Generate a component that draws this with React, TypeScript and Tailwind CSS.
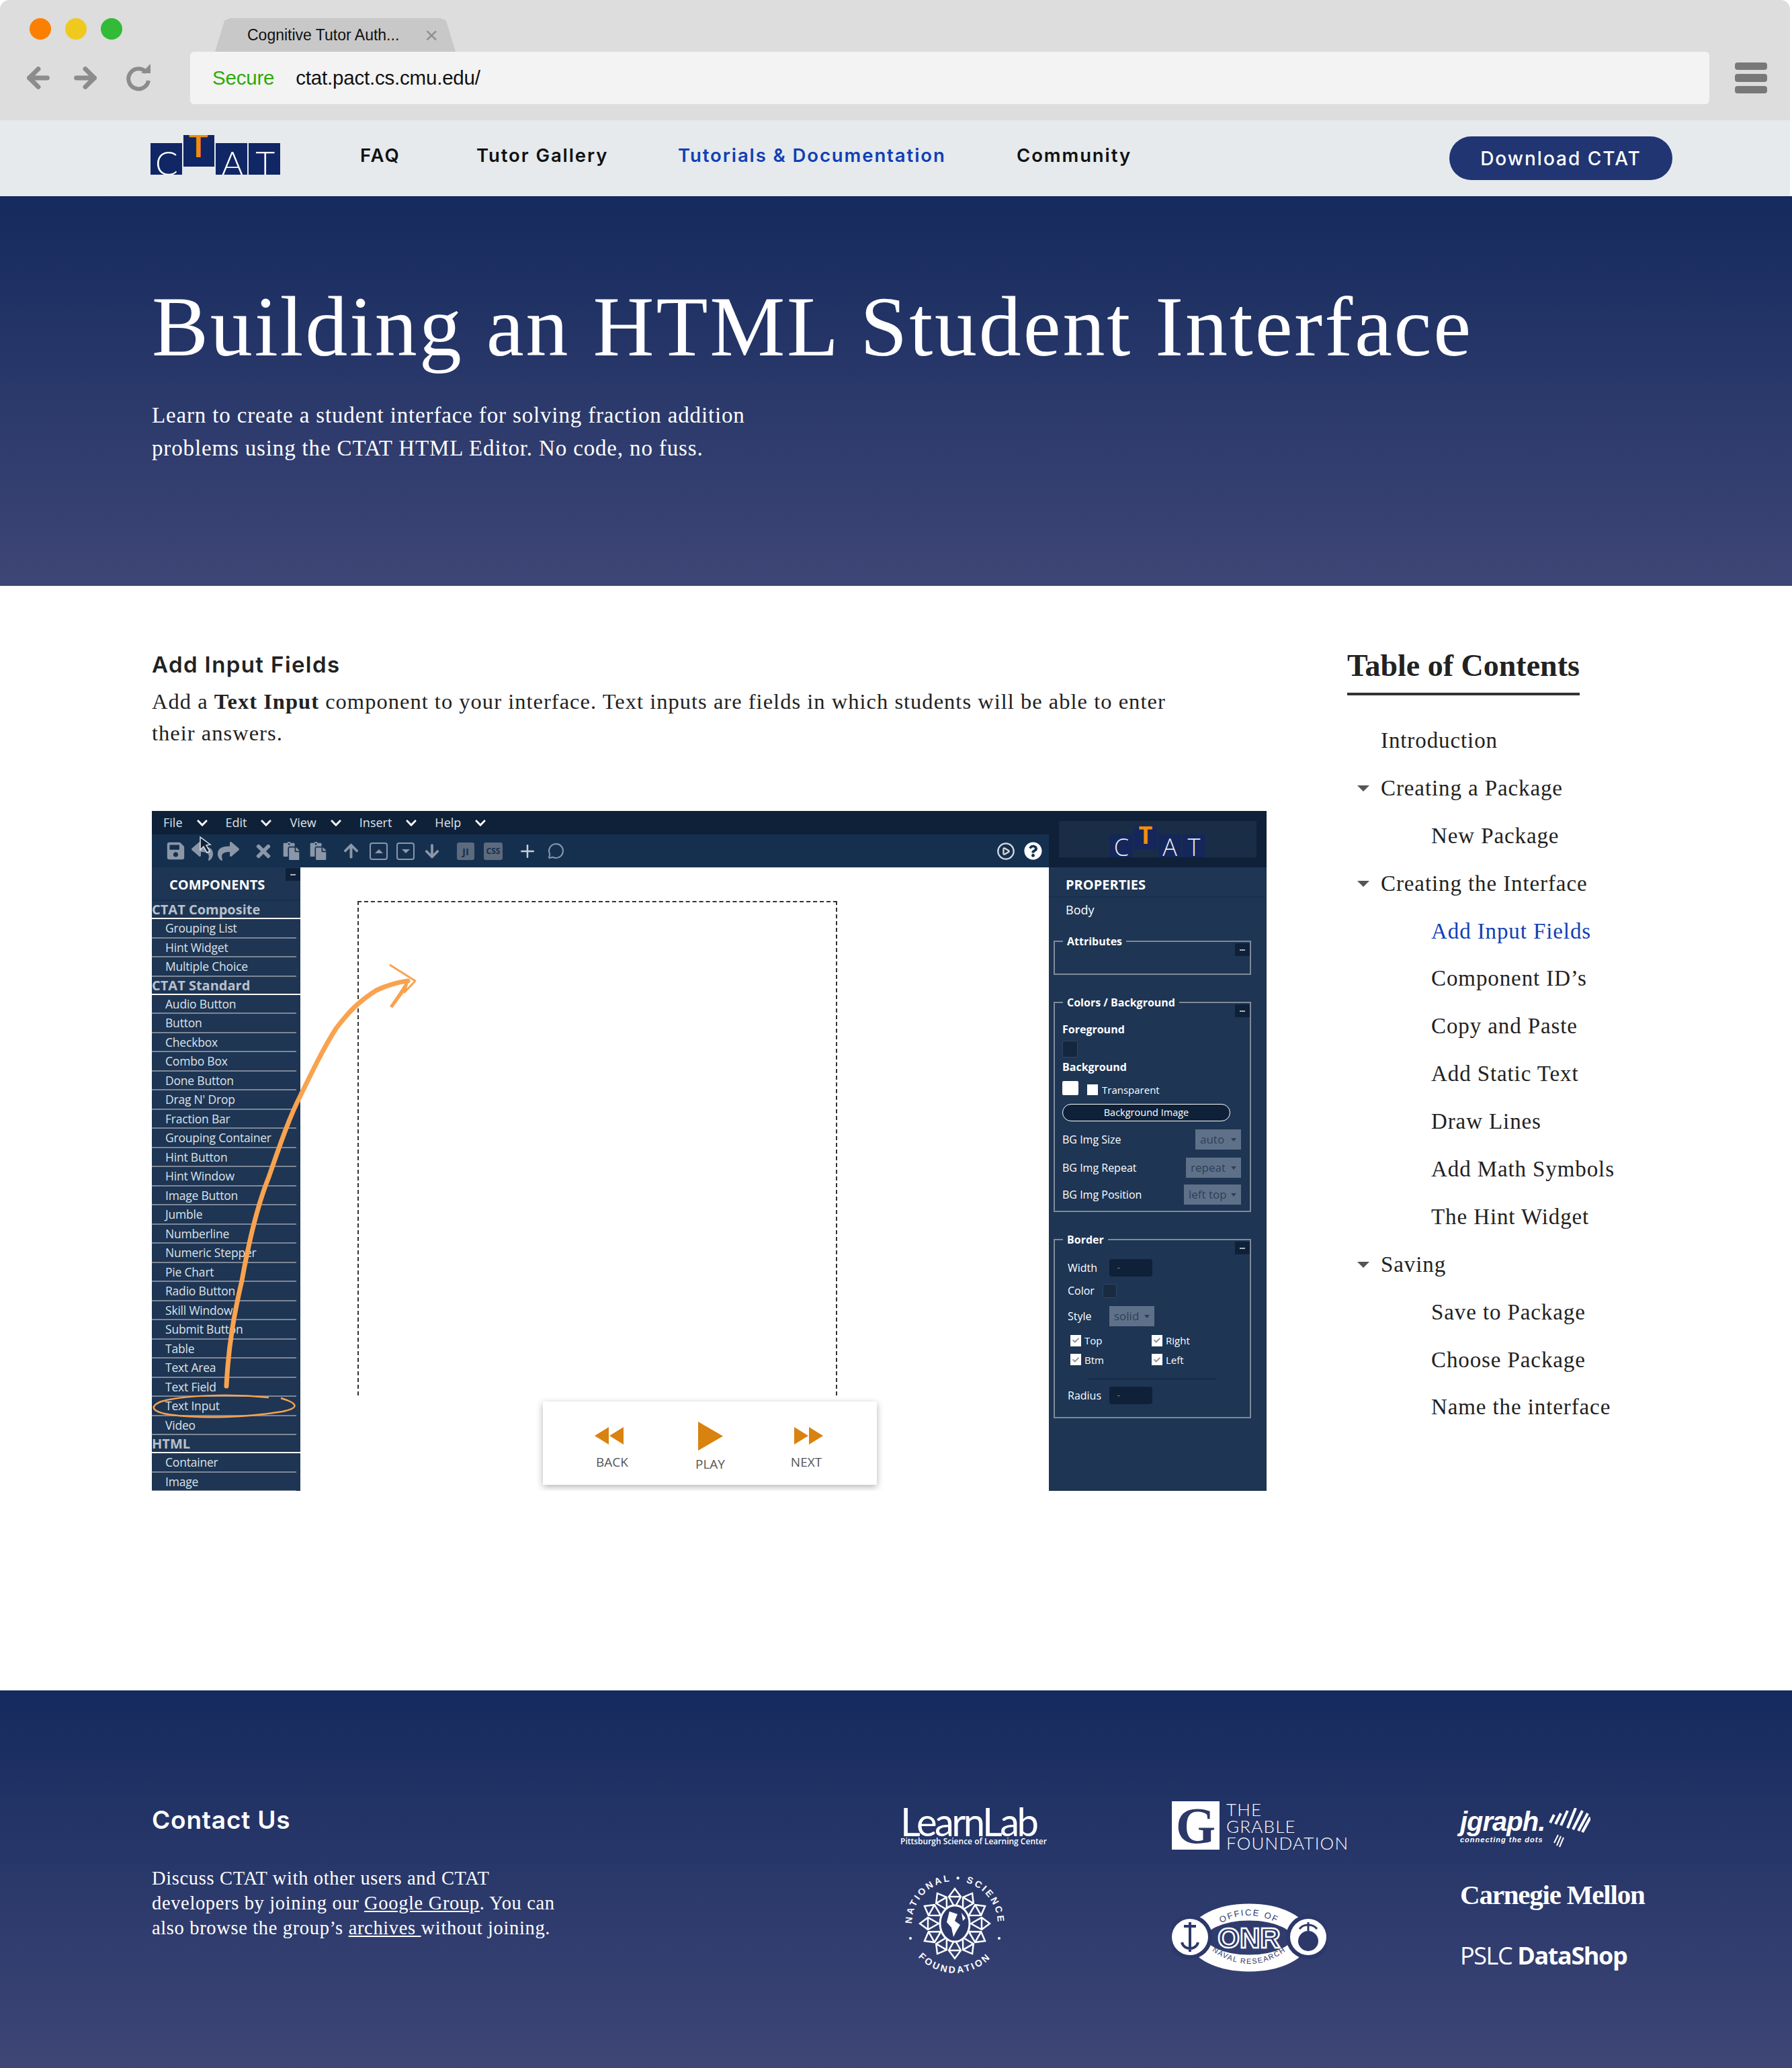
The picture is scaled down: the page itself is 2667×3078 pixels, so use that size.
import React from 'react';
import { FaSave, FaReply, FaShare, FaTimes, FaPaste, FaArrowUp, FaArrowDown, FaQuestionCircle, FaChevronDown, FaCheck } from 'react-icons/fa';
import { ArrowLeft, ArrowRight, Plus, MessageCircle, CirclePlay } from 'lucide-react';

const composite = ['Grouping List', 'Hint Widget', 'Multiple Choice'];
const standard = ['Audio Button', 'Button', 'Checkbox', 'Combo Box', 'Done Button', "Drag N' Drop", 'Fraction Bar', 'Grouping Container', 'Hint Button', 'Hint Window', 'Image Button', 'Jumble', 'Numberline', 'Numeric Stepper', 'Pie Chart', 'Radio Button', 'Skill Window', 'Submit Button', 'Table', 'Text Area', 'Text Field', 'Text Input', 'Video'];
const html = ['Container', 'Image'];

const toc: { label: string; level: number; caret?: boolean; active?: boolean }[] = [
  { label: 'Introduction', level: 0 },
  { label: 'Creating a Package', level: 0, caret: true },
  { label: 'New Package', level: 1 },
  { label: 'Creating the Interface', level: 0, caret: true },
  { label: 'Add Input Fields', level: 1, active: true },
  { label: 'Component ID’s', level: 1 },
  { label: 'Copy and Paste', level: 1 },
  { label: 'Add Static Text', level: 1 },
  { label: 'Draw Lines', level: 1 },
  { label: 'Add Math Symbols', level: 1 },
  { label: 'The Hint Widget', level: 1 },
  { label: 'Saving', level: 0, caret: true },
  { label: 'Save to Package', level: 1 },
  { label: 'Choose Package', level: 1 },
  { label: 'Name the interface', level: 1 },
];

const Row = ({ label }: { label: string }) => (
  <div className="h-[28.5px] w-[215px] border-b-2 border-[#7d8797] pl-[20px] text-[17.5px] leading-[26px] tracking-[-0.2px] text-[#dde2e8]">{label}</div>
);

const Group = ({ label }: { label: string }) => (
  <div className="h-[27px] w-full border-b-2 border-white text-[20px] leading-[25px] font-bold text-[#b9c0cb]">{label}</div>
);

const Minus = ({ top = 'top-[1px]' }: { top?: string }) => (
  <div className={`absolute right-0 flex h-[19px] w-[22px] items-center justify-center bg-[#0f2138] ${top}`}>
    <div className="h-[2px] w-[8px] bg-[#aab2bd]"></div>
  </div>
);

const Select = ({ value, w }: { value: string; w: string }) => (
  <div className={`flex h-[30px] items-center justify-between bg-[#5f7189] pr-[7px] pl-[7px] text-[17px] text-[#2c3f58] ${w}`}>
    {value}
    <span className="h-0 w-0 border-x-[4px] border-t-[5px] border-x-transparent border-t-[#2c3f58]"></span>
  </div>
);

const Check = ({ label }: { label: string }) => (
  <div className="flex items-center gap-[5px] text-[15px] text-white">
    <span className="flex h-[17px] w-[16px] items-center justify-center bg-white text-[#8d949c]">
      <FaCheck size={10} />
    </span>
    {label}
  </div>
);

const CtatLogo = () => (
  <div className="mt-[-10px] flex h-[59px] w-[193px] gap-[2px] font-['Lato',sans-serif]">
    <div className="mt-[12px] h-[47px] w-[47px] overflow-hidden bg-[#112664] pl-[7px] text-[50px] leading-[58px] font-light text-white">C</div>
    <div className="flex h-[47px] w-[47px] justify-center overflow-hidden bg-[#112664] text-[48px] leading-[30px] font-bold text-[#f28c0f]">T</div>
    <div className="mt-[12px] h-[47px] w-[47px] overflow-hidden bg-[#112664] pl-[8px] text-[50px] leading-[58px] font-light text-white">A</div>
    <div className="mt-[12px] h-[47px] w-[47px] overflow-hidden bg-[#112664] pl-[10px] text-[50px] leading-[58px] font-light text-white">T</div>
  </div>
);

const NavBar = () => (
  <div className="flex h-[113px] items-center bg-[#e6eaed] pr-[175px] pl-[224px] font-['Inter',sans-serif] text-[27.5px] font-semibold tracking-[1.9px] text-[#111]">
    <CtatLogo />
    <a className="mt-[-8px] ml-[119px] w-[173px]">FAQ</a>
    <a className="mt-[-8px] w-[300px]">Tutor Gallery</a>
    <a className="mt-[-8px] w-[504px] text-[#1140b5]">Tutorials &amp; Documentation</a>
    <a className="mt-[-8px]">Community</a>
    <button className="ml-auto h-[65px] w-[332px] rounded-full bg-[#203572] text-[28px] font-medium tracking-[2px] text-white">Download CTAT</button>
  </div>
);

const BrowserChrome = () => (
  <div className="h-[179px] overflow-hidden rounded-t-[14px] bg-[#dddddd] font-['Liberation_Sans',sans-serif]">
    <div className="flex h-[77px] pt-[27px] pl-[44px]">
      <div className="flex gap-[21px]">
        <span className="h-[32px] w-[32px] rounded-full bg-[#fb7f00]"></span>
        <span className="h-[32px] w-[32px] rounded-full bg-[#f0c91f]"></span>
        <span className="h-[32px] w-[32px] rounded-full bg-[#31bb36]"></span>
      </div>
      <div className="ml-[138px] flex h-[50px] w-[358px] items-center justify-between bg-[#c8c8c8] pr-[26px] pl-[48px] text-[23px] text-[#111] [clip-path:polygon(0_100%,14px_8%,22px_0,calc(100%-22px)_0,calc(100%-14px)_8%,100%_100%)]">
        <span>Cognitive Tutor Auth...</span>
        <span className="text-[34px] leading-[34px] text-[#8f8f8f]">×</span>
      </div>
    </div>
    <div className="flex h-[78px] items-center pr-[34px] pl-[34px]">
      <ArrowLeft size={46} strokeWidth={3.6} className="text-[#8c8c8c]" />
      <ArrowRight size={46} strokeWidth={3.6} className="ml-[24px] text-[#8c8c8c]" />
      <svg viewBox="0 0 40 44" className="ml-[36px] h-[44px] w-[40px] text-[#8c8c8c]">
        <path d="M32 14a15 15 0 1 0 3 12" fill="none" stroke="currentColor" strokeWidth="6" />
        <path d="M24 15h14V1z" fill="currentColor" />
      </svg>
      <div className="ml-[57px] flex h-full w-[2262px] items-center rounded-[6px] bg-[#f3f3f3] pl-[33px] text-[29.5px] tracking-[-0.2px] text-[#111]">
        <span className="text-[#2eaa05]">Secure</span>
        <span className="ml-[32px]">ctat.pact.cs.cmu.edu/</span>
      </div>
      <div className="ml-[38px] flex w-[48px] flex-col gap-[6px]">
        <span className="h-[11px] rounded-[4px] bg-[#787878]"></span>
        <span className="h-[12px] rounded-[4px] bg-[#787878]"></span>
        <span className="h-[11px] rounded-[4px] bg-[#787878]"></span>
      </div>
    </div>
  </div>
);

const Toolbar = () => (
  <div className="flex h-[49px] items-center bg-[#15304f] pl-[21px] text-[#8b97a8]">
    <FaSave size={29} />
    <FaReply size={32} className="ml-[9px]" />
    <FaShare size={32} className="ml-[7px]" />
    <FaTimes size={30} className="ml-[21px]" />
    <FaPaste size={27} className="ml-[13px]" />
    <FaPaste size={27} className="ml-[13px]" />
    <FaArrowUp size={25} className="ml-[23px]" />
    <span className="ml-[15px] flex h-[26px] w-[27px] items-center justify-center rounded-[4px] border-2 border-[#8b97a8]">
      <span className="h-0 w-0 border-x-[6px] border-b-[6px] border-x-transparent border-b-[#8b97a8]"></span>
    </span>
    <span className="ml-[13px] flex h-[26px] w-[27px] items-center justify-center rounded-[4px] border-2 border-[#8b97a8]">
      <span className="h-0 w-0 border-x-[6px] border-t-[6px] border-x-transparent border-t-[#8b97a8]"></span>
    </span>
    <FaArrowDown size={24} className="ml-[14px]" />
    <span className="ml-[25px] h-[26px] w-[26px] rounded-[3px] bg-[#5d6a7c] text-center text-[15px] leading-[26px] font-bold text-[#15304f]">JI</span>
    <span className="ml-[14px] h-[26px] w-[28px] rounded-[3px] bg-[#5d6a7c] text-center text-[12px] leading-[26px] font-bold text-[#15304f]">CSS</span>
    <Plus size={30} strokeWidth={2} className="ml-[22px] text-[#c8ced6]" />
    <MessageCircle size={25} strokeWidth={2} className="ml-[15px]" />
    <div className="ml-auto flex items-center gap-[13px] pr-[10px] text-white">
      <CirclePlay size={28} strokeWidth={2} className="text-[#d5d9de]" />
      <FaQuestionCircle size={27} />
    </div>
  </div>
);

const EditorCapture = () => (
  <div className="relative h-[1012px] w-[1659px] overflow-hidden bg-white font-['Open_Sans',sans-serif]">
    <div className="flex h-[84px]">
      <div className="w-[1335px] bg-[#0f2138]">
        <div className="flex h-[35px] items-center text-[18px] text-[#dfe3e8]">
          {['File', 'Edit', 'View', 'Insert', 'Help'].map((name, i) => (
            <React.Fragment key={name}>
              <span className={i === 0 ? 'ml-[17px]' : 'ml-[26px]'}>{name}</span>
              <FaChevronDown size={18} className="ml-[20px] text-white" />
            </React.Fragment>
          ))}
        </div>
        <Toolbar />
      </div>
      <div className="flex w-[324px] justify-center bg-[#0f2138] pt-[15px]">
        <div className="flex h-[54px] w-[294px] items-end justify-center gap-[2px] bg-[#1a2d47] text-[44px] leading-[44px] font-light text-[#e8ebef]">
          <span className="h-[34px] w-[34px] overflow-hidden bg-[#14265a] text-center text-[36px] leading-[38px]">C</span>
          <span className="mb-[12px] h-[34px] w-[34px] overflow-hidden bg-[#14265a] text-center text-[36px] leading-[26px] font-bold text-[#f28c0f]">T</span>
          <span className="h-[34px] w-[34px] overflow-hidden bg-[#14265a] text-center text-[36px] leading-[38px]">A</span>
          <span className="h-[34px] w-[34px] overflow-hidden bg-[#14265a] text-center text-[36px] leading-[38px]">T</span>
        </div>
      </div>
    </div>

    <div className="flex h-[928px]">
      <div className="relative w-[221px] bg-[#1e3553]">
        <Minus />
        <div className="h-[50px] border-b-2 border-[#15304f] pl-[26px] text-[20px] leading-[52px] font-bold text-white">COMPONENTS</div>
        <Group label="CTAT Composite" />
        {composite.map((c) => <Row key={c} label={c} />)}
        <Group label="CTAT Standard" />
        {standard.map((c) => <Row key={c} label={c} />)}
        <Group label="HTML" />
        {html.map((c) => <Row key={c} label={c} />)}
      </div>

      <div className="flex-1 bg-white pt-[50px] pl-[85px]">
        <div className="h-[736px] w-[714px] border-x-2 border-t-2 border-dashed border-[#333]"></div>
      </div>

      <div className="w-[324px] bg-[#1e3553] pr-[23px] pl-[7px] text-white">
        <div className="mr-[-21px] ml-[-7px] h-[45px] border-b-2 border-[#15304f] pl-[25px] text-[20px] leading-[52px] font-bold">PROPERTIES</div>
        <div className="pt-[5px] pl-[18px] text-[18px] leading-[26px]">Body</div>
        <fieldset className="relative mt-[24px] h-[60px] border-2 border-[#7f8a99]">
          <legend className="ml-[12px] px-[6px] text-[16px] leading-[20px] font-bold">Attributes</legend>
          <Minus top="top-[-7px]" />
        </fieldset>
        <fieldset className="relative mt-[31px] h-[322px] border-2 border-[#7f8a99] px-[11px]">
          <legend className="ml-[1px] px-[6px] text-[16px] leading-[20px] font-bold">Colors / Background</legend>
          <Minus top="top-[-7px]" />
          <div className="pt-[20px] text-[16px] leading-[20px] font-bold">Foreground</div>
          <div className="mt-[7px] h-[25px] w-[23px] rounded-[2px] border border-[#2e4565] bg-[#15263f]"></div>
          <div className="mt-[4px] text-[16px] leading-[20px] font-bold">Background</div>
          <div className="mt-[11px] flex items-end">
            <span className="h-[21px] w-[24px] rounded-[2px] bg-white"></span>
            <span className="ml-[13px] h-[16px] w-[16px] bg-white"></span>
            <span className="ml-[6px] text-[15px] leading-[16px]">Transparent</span>
          </div>
          <div className="mt-[13px] flex h-[26px] w-[250px] items-center justify-center rounded-full border border-white bg-[#0f2138] text-[14.5px]">Background Image</div>
          <div className="mt-[12px] flex h-[30px] items-center justify-between pr-[2px] text-[16px]">BG Img Size<Select value="auto" w="w-[68px]" /></div>
          <div className="mt-[12px] flex h-[30px] items-center justify-between pr-[2px] text-[16px]">BG Img Repeat<Select value="repeat" w="w-[82px]" /></div>
          <div className="mt-[10px] flex h-[30px] items-center justify-between pr-[2px] text-[16px]">BG Img Position<Select value="left top" w="w-[85px]" /></div>
        </fieldset>
        <fieldset className="relative mt-[31px] h-[276px] border-2 border-[#7f8a99] pl-[19px]">
          <legend className="ml-[-7px] px-[6px] text-[16px] leading-[20px] font-bold">Border</legend>
          <Minus top="top-[-7px]" />
          <div className="mt-[19px] flex h-[26px] items-center text-[16px]">
            <span className="w-[62px]">Width</span>
            <span className="h-[26px] w-[64px] rounded-[4px] bg-[#0f2138] pl-[12px] text-[12px] leading-[26px] text-[#8b97a8]">-</span>
          </div>
          <div className="mt-[10px] flex h-[22px] items-center text-[16px]">
            <span className="w-[52px]">Color</span>
            <span className="h-[21px] w-[21px] rounded-[2px] border border-[#2e4565] bg-[#1a2a40]"></span>
          </div>
          <div className="mt-[12px] flex h-[30px] items-center text-[16px]">
            <span className="w-[62px]">Style</span>
            <Select value="solid" w="w-[67px]" />
          </div>
          <div className="mt-[10px] grid w-[230px] grid-cols-[121px_1fr] gap-y-[6px] pl-[4px]">
            <Check label="Top" />
            <Check label="Right" />
            <Check label="Btm" />
            <Check label="Left" />
          </div>
          <div className="mt-[17px] ml-[31px] h-[1px] w-[190px] bg-[#0f2138]"></div>
          <div className="mt-[11px] flex h-[26px] items-center text-[16px]">
            <span className="w-[62px]">Radius</span>
            <span className="h-[26px] w-[64px] rounded-[4px] bg-[#0f2138] pl-[12px] text-[12px] leading-[26px] text-[#8b97a8]">-</span>
          </div>
        </fieldset>
      </div>
    </div>

    {/* hand drawn arrow + circle sitting on top of the capture */}
    <svg viewBox="226 1208 1659 1012" className="absolute inset-0 h-full w-full" fill="none">
      <path d="M337 2064C340 2000 350 1950 360 1907C372 1840 385 1790 400 1753C415 1710 430 1665 447 1632C465 1595 482 1560 500 1532C515 1512 525 1502 533 1495C545 1485 552 1480 560 1475C575 1468 590 1463 607 1461" stroke="#f9a24f" strokeWidth="7" strokeLinecap="round" />
      <path d="M582 1499L607 1461L602 1478L618 1461L580 1437" stroke="#f9a24f" strokeWidth="3" strokeLinejoin="round" />
      <path d="M582 1500L604 1470" stroke="#f9a24f" strokeWidth="5" />
      <path d="M400 2081C340 2075 270 2078 240 2087C222 2094 226 2102 250 2106C300 2114 370 2110 420 2102C445 2097 445 2090 418 2082" stroke="#f9a24f" strokeWidth="2.5" />
      <path d="M298 1247V1266L303 1261L308 1270L312 1268L307 1259L313 1258Z" fill="#0f2138" stroke="#dfe3e8" strokeWidth="1.5" />
    </svg>

    <div className="absolute top-[879px] left-[582px] flex h-[124px] w-[497px] bg-white text-[19px] text-[#555] shadow-[0_3px_10px_rgba(0,0,0,0.3)]">
      <div className="flex w-[176px] flex-col items-center pt-[38px] pl-[30px]">
        <svg viewBox="0 0 43 26" className="mr-[10px] h-[26px] w-[43px] fill-[#d9820f]"><path d="M21 0V26L0 13ZM43 0V26L22 13Z" /></svg>
        <span className="mt-[12px]">BACK</span>
      </div>
      <div className="flex w-[144px] flex-col items-center pt-[30px] pl-[2px]">
        <svg viewBox="0 0 37 43" className="h-[43px] w-[37px] fill-[#d9820f]"><path d="M0 0L37 21.5L0 43Z" /></svg>
        <span className="mt-[6px]">PLAY</span>
      </div>
      <div className="flex w-[144px] flex-col items-center pt-[38px]">
        <svg viewBox="0 0 43 26" className="ml-[6px] h-[26px] w-[43px] fill-[#d9820f]"><path d="M0 0L21 13L0 26ZM22 0L43 13L22 26Z" /></svg>
        <span className="mt-[12px]">NEXT</span>
      </div>
    </div>
  </div>
);

const TableOfContents = () => (
  <aside className="w-[420px]">
    <h3 className="inline-block border-b-[4px] border-[#333] pb-[14px] text-[46px] leading-[52px] font-bold text-[#222]">Table of Contents</h3>
    <ul className="mt-[32px]">
      {toc.map((t) => (
        <li key={t.label} className={`relative h-[70.9px] text-[33px] leading-[70px] tracking-[0.9px] ${t.level === 1 ? 'pl-[125px]' : 'pl-[50px]'} ${t.active ? 'text-[#1140b5]' : 'text-[#222]'}`}>
          {t.caret && <span className="absolute top-[31px] left-[15px] h-0 w-0 border-x-[9px] border-t-[9px] border-x-transparent border-t-[#555]"></span>}
          {t.label}
        </li>
      ))}
    </ul>
  </aside>
);

const NsfLogo = () => (
  <svg viewBox="-78 -78 156 156" className="h-[156px] w-[156px]">
    <defs>
      <path id="nsf-top" d="M-63 12A64 64 0 1 1 63 12" />
      <path id="nsf-bot" d="M-66 33A74 74 0 0 0 66 33" />
    </defs>
    <text fill="white" fontSize="14" fontWeight="700" fontFamily="Liberation Sans, sans-serif" letterSpacing="3" textAnchor="middle"><textPath href="#nsf-top" startOffset="50%">NATIONAL • SCIENCE</textPath></text>
    <text fill="white" fontSize="14" fontWeight="700" fontFamily="Liberation Sans, sans-serif" letterSpacing="3" textAnchor="middle"><textPath href="#nsf-bot" startOffset="50%">FOUNDATION</textPath></text>
    <circle cx="-66" cy="22" r="2" fill="white" />
    <circle cx="66" cy="22" r="2" fill="white" />
    <g stroke="white" strokeWidth="2.5" fill="none">
      {[0, 30, 60, 90, 120, 150, 180, 210, 240, 270, 300, 330].map((a) => (
        <g key={a} transform={`rotate(${a})`}>
          <path d="M0 -24L-9 -40L0 -52L9 -40Z" />
          <path d="M-9 -40L9 -40" />
        </g>
      ))}
    </g>
    <ellipse rx="22" ry="27" fill="#2c386a" stroke="white" strokeWidth="3" />
    <path d="M-8 -18L4 -14L0 -4L8 2L2 12L-2 20L-5 6L-12 -2Z" fill="white" />
    <path d="M10 -16L16 -8L12 -4Z" fill="white" />
  </svg>
);

const OnrLogo = () => (
  <svg viewBox="0 0 231 102" className="h-[102px] w-[231px]">
    <defs>
      <path id="onr-top" d="M72 30Q115 6 158 30" />
      <path id="onr-bot" d="M62 72Q115 108 168 72" />
    </defs>
    <ellipse cx="115" cy="51" rx="78" ry="38" fill="none" stroke="white" strokeWidth="25" />
    <circle cx="27" cy="50" r="33" fill="#2c386a" />
    <circle cx="203" cy="50" r="33" fill="#2c386a" />
    <circle cx="27" cy="50" r="27" fill="white" />
    <circle cx="203" cy="50" r="27" fill="white" />
    <path d="M27 28V72M18 34H36M15 58C18 70 36 70 39 58" stroke="#2c386a" strokeWidth="4" fill="none" />
    <circle cx="203" cy="56" r="15" fill="#2c386a" />
    <path d="M203 28V44M190 38C196 30 210 30 216 38" stroke="#2c386a" strokeWidth="3" fill="none" />
    <text fill="#2c386a" fontSize="13" fontFamily="Liberation Sans, sans-serif" letterSpacing="2" textAnchor="middle"><textPath href="#onr-top" startOffset="50%">OFFICE OF</textPath></text>
    <text fill="#2c386a" fontSize="11" fontFamily="Liberation Sans, sans-serif" letterSpacing="1.5" textAnchor="middle"><textPath href="#onr-bot" startOffset="50%">NAVAL RESEARCH</textPath></text>
    <text x="115" y="66" textAnchor="middle" fill="#2c386a" stroke="white" strokeWidth="2.5" fontSize="42" fontFamily="Liberation Sans, sans-serif" fontWeight="700">ONR</text>
  </svg>
);

const Footer = () => (
  <footer className="flex h-[562px] bg-gradient-to-b from-[#152a5e] to-[#3e4676] pl-[226px] text-white">
    <div className="w-[1114px] pt-[173px]">
      <h4 className="font-['Inter',sans-serif] text-[37px] leading-[40px] font-semibold tracking-[0.8px]">Contact Us</h4>
      <p className="mt-[48px] w-[625px] text-[28.5px] leading-[37px] tracking-[0.65px]">
        Discuss CTAT with other users and CTAT developers by joining our <u>Google Group</u>. You can also browse the group’s <u>archives </u>without joining.
      </p>
    </div>
    <div className="w-[404px] pt-[165px]">
      <div className="mt-[7px] font-['Lato',sans-serif] text-[58px] leading-[46px] tracking-[-3.6px]">LearnLab</div>
      <div className="font-['Open_Sans',sans-serif] text-[12px] leading-[14px] font-semibold">Pittsburgh Science of Learning Center</div>
      <div className="mt-[37px] ml-[3px]"><NsfLogo /></div>
    </div>
    <div className="w-[429px] pt-[165px]">
      <div className="flex h-[72px] gap-[10px]">
        <div className="flex h-[72px] w-[71px] items-center justify-center bg-white text-[76px] leading-[72px] font-bold text-[#2c386a]">G</div>
        <div className="font-['Lato',sans-serif] text-[26px] leading-[25px] font-light tracking-[1.2px]">THE<br />GRABLE<br />FOUNDATION</div>
      </div>
      <div className="mt-[80px]"><OnrLogo /></div>
    </div>
    <div className="pt-[175px]">
      <div className="flex h-[60px] items-start">
        <div className="font-['Liberation_Sans',sans-serif]">
          <div className="text-[40px] leading-[40px] font-bold tracking-[-1px] italic">jgraph.</div>
          <div className="text-[11px] leading-[14px] font-bold tracking-[1px] italic">connecting the dots</div>
        </div>
        <svg viewBox="0 0 64 60" className="ml-[4px] h-[60px] w-[64px]" stroke="white" fill="none">
          <path d="M4 22L10 10M12 24L20 8M20 26L30 4M30 30L42 0M38 32L52 4M46 34L60 8M52 36L64 14" strokeWidth="4" />
          <path d="M10 52L16 40M20 42L14 56M24 44L18 58" strokeWidth="2" />
        </svg>
      </div>
      <div className="mt-[46px] text-[41px] leading-[46px] font-bold tracking-[-1.2px]">Carnegie Mellon</div>
      <div className="mt-[46px] font-['Open_Sans',sans-serif] text-[36px] leading-[44px] tracking-[-1.4px]">PSLC <b>DataShop</b></div>
    </div>
  </footer>
);

export default function App() {
  return (
    <div className="w-[2667px] bg-white font-['Liberation_Serif',serif]">
      <div className="mr-[3px]">
        <BrowserChrome />
        <NavBar />
      </div>
      <header className="h-[580px] bg-gradient-to-b from-[#152a5e] to-[#3e4676] pt-[125px] pl-[226px] text-white">
        <h1 className="text-[126px] leading-[140px] tracking-[2.8px]">Building an HTML Student Interface</h1>
        <p className="mt-[37px] w-[960px] text-[33px] leading-[49px] tracking-[0.85px]">Learn to create a student interface for solving fraction addition problems using the CTAT HTML Editor. No code, no fuss.</p>
      </header>
      <main className="flex h-[1644px] pl-[226px]">
        <section className="w-[1779px] pt-[97px]">
          <h2 className="font-['Inter',sans-serif] text-[33px] leading-[40px] font-semibold tracking-[1.4px] text-[#222]">Add Input Fields</h2>
          <p className="mt-[12px] w-[1530px] text-[32.5px] leading-[47px] tracking-[1.02px] text-[#222]">
            Add a <b>Text Input</b> component to your interface. Text inputs are fields in which students will be able to enter their answers.
          </p>
          <div className="mt-[92px]"><EditorCapture /></div>
        </section>
        <div className="pt-[93px]"><TableOfContents /></div>
      </main>
      <Footer />
    </div>
  );
}
